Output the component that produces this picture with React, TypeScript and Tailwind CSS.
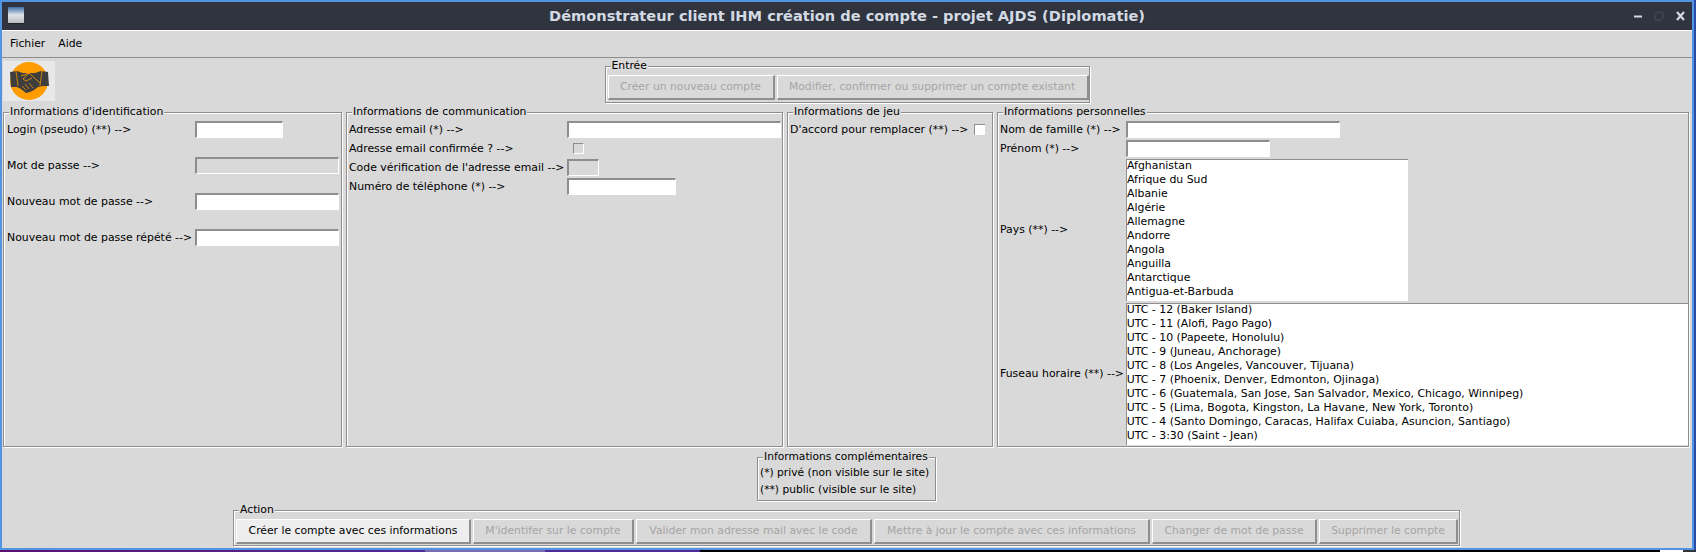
import type { ReactNode } from "react";

const countries = [
  "Afghanistan",
  "Afrique du Sud",
  "Albanie",
  "Algérie",
  "Allemagne",
  "Andorre",
  "Angola",
  "Anguilla",
  "Antarctique",
  "Antigua-et-Barbuda",
];

const timezones = [
  "UTC - 12 (Baker Island)",
  "UTC - 11 (Alofi, Pago Pago)",
  "UTC - 10 (Papeete, Honolulu)",
  "UTC - 9 (Juneau, Anchorage)",
  "UTC - 8 (Los Angeles, Vancouver, Tijuana)",
  "UTC - 7 (Phoenix, Denver, Edmonton, Ojinaga)",
  "UTC - 6 (Guatemala, San Jose, San Salvador, Mexico, Chicago, Winnipeg)",
  "UTC - 5 (Lima, Bogota, Kingston, La Havane, New York, Toronto)",
  "UTC - 4 (Santo Domingo, Caracas, Halifax Cuiaba, Asuncion, Santiago)",
  "UTC - 3:30 (Saint - Jean)",
];

// Swing etched box with its title sitting on the top line
function Group({ title, className, children }: { title: string; className: string; children?: ReactNode }) {
  return (
    <div className={"relative border border-[#8e8e8e] shadow-[inset_1px_1px_0_#fff,1px_1px_0_#fff] " + className}>
      <span className="absolute left-[5px] -top-[8px] bg-[#d9d9d9] px-[1px] leading-[14px] whitespace-nowrap">{title}</span>
      {children}
    </div>
  );
}

function Field({ className, disabled }: { className: string; disabled?: boolean }) {
  return (
    <div
      className={
        "h-[17px] border-t-2 border-l-2 border-t-[#8e8e8e] border-l-[#8e8e8e] border-r border-b border-r-white border-b-white " +
        (disabled ? "bg-[#d9d9d9] " : "bg-white ") +
        className
      }
    />
  );
}

function Check({ className }: { className: string }) {
  return <div className={"h-[11px] w-[11px] border-t border-l border-[#8e8e8e] " + className} />;
}

function ListBox({ items, className }: { items: string[]; className: string }) {
  return (
    <div className={"overflow-hidden border-t border-l border-[#8e8e8e] bg-white " + className}>
      <div className="-mt-[1px] flex flex-col">
        {items.map((item) => (
          <div key={item} className="h-[14px] shrink-0 leading-[14px] whitespace-nowrap">
            {item}
          </div>
        ))}
      </div>
    </div>
  );
}

function Btn({ label, className, enabled }: { label: string; className: string; enabled?: boolean }) {
  return (
    <div
      className={
        "flex items-center justify-center whitespace-nowrap border border-b-2 border-r-2 border-[#8e8e8e] border-t-white border-l-white " +
        (enabled ? "bg-[#eeeeee] text-black " : "text-[#a5a5a5] ") +
        className
      }
    >
      {label}
    </div>
  );
}

function Logo() {
  return (
    <svg width="52" height="40" viewBox="0 0 52 40" className="block">
      <rect width="52" height="40" fill="#e8e8e8" />
      <circle cx="26" cy="20" r="19" fill="#ff9c00" />
      <path
        d="M7 11l7-1 6 2h12l6-2 7 1 1 14-6 0-5 1-4 3-4 2-4 1-5-4-4-2-6 0z"
        fill="#3e3e3e"
      />
      <path d="M13 10l2 15M39 10l-2 15" fill="none" stroke="#ff9c00" strokeWidth="0.7" />
      <path d="M18 15l8-3 11 10M26 12l-6 6 3 2 6-3" fill="none" stroke="#ff9c00" strokeWidth="0.8" />
      <path d="M19 25l4 4M22 23l4 5M26 22l4 5" fill="none" stroke="#ff9c00" strokeWidth="0.7" />
    </svg>
  );
}

export default function App() {
  return (
    <div className="flex h-[552px] w-[1696px] flex-col overflow-hidden bg-black font-['DejaVu_Sans',sans-serif] text-[10.8px] leading-[14px] text-black">
      <div className="flex h-[550px] shrink-0">
        <div className="flex h-[550px] w-[1694px] flex-col border-2 border-[#5294e2]">
          {/* barre de titre */}
          <div className="relative flex h-[28px] shrink-0 items-center justify-center bg-[#2f343f] text-[14.6px] font-bold text-[#d3dae3]">
            <div className="absolute left-[6px] top-[5px] h-[16px] w-[16px] bg-gradient-to-b from-[#3f6fa8] via-[#dfe3e8] to-[#b9bcc0] shadow-[0_1px_0_#1f2229]" />
            Démonstrateur client IHM création de compte - projet AJDS (Diplomatie)
            <svg width="52" height="12" viewBox="0 0 52 12" className="absolute right-[6px] top-[8px]">
              <path d="M0 6.5h8" stroke="#d3dae3" strokeWidth="2" />
              <path d="M21 10V4l3-2h5M29 2v6l-3 2h-5" fill="none" stroke="#3c414c" strokeWidth="2" />
              <path d="M43 2l7 8M50 2l-7 8" stroke="#d3dae3" strokeWidth="2.2" />
            </svg>
          </div>
          <div className="h-[1px] shrink-0 bg-white" />

          <div className="flex min-h-0 flex-1 flex-col bg-[#d9d9d9]">
            {/* menu */}
            <div className="flex h-[27px] shrink-0 items-center gap-[13px] border-b border-[#8e8e8e] pl-[8px]">
              <span>Fichier</span>
              <span>Aide</span>
            </div>

            {/* logo + entrée */}
            <div className="relative flex h-[54px] shrink-0 justify-center pt-[8px]">
              <div className="absolute left-[1px] top-[3px]">
                <Logo />
              </div>
              <Group title="Entrée" className="flex h-[37px] w-[485px] gap-[2px] pl-[2px] pt-[8px]">
                <Btn label="Créer un nouveau compte" className="h-[25px] w-[167px]" />
                <Btn label="Modifier, confirmer ou supprimer un compte existant" className="h-[25px] w-[312px]" />
              </Group>
            </div>

            {/* panneaux */}
            <div className="flex h-[335px] shrink-0 gap-[4px] whitespace-nowrap pl-[1px] text-[10.9px]">
              <Group title="Informations d'identification" className="flex w-[339px] shrink-0 flex-col gap-[19px] pl-[3px] pt-[8px]">
                <div className="flex items-center">
                  <span className="w-[188px]">Login (pseudo) (**) --&gt;</span>
                  <Field className="w-[88px]" />
                </div>
                <div className="flex items-center">
                  <span className="w-[188px]">Mot de passe --&gt;</span>
                  <Field className="w-[144px]" disabled />
                </div>
                <div className="flex items-center">
                  <span className="w-[188px]">Nouveau mot de passe --&gt;</span>
                  <Field className="w-[144px]" />
                </div>
                <div className="flex items-center">
                  <span className="w-[188px]">Nouveau mot de passe répété --&gt;</span>
                  <Field className="w-[144px]" />
                </div>
              </Group>

              <Group title="Informations de communication" className="flex w-[437px] shrink-0 flex-col gap-[2px] pl-[2px] pt-[8px]">
                <div className="flex items-center">
                  <span className="w-[218px]">Adresse email (*) --&gt;</span>
                  <Field className="w-[214px]" />
                </div>
                <div className="flex h-[17px] items-center">
                  <span className="w-[224px]">Adresse email confirmée ? --&gt;</span>
                  <Check className="bg-[#d9d9d9] border-r border-b border-r-white border-b-white" />
                </div>
                <div className="flex items-center">
                  <span className="w-[218px]">Code vérification de l'adresse email --&gt;</span>
                  <Field className="w-[32px]" disabled />
                </div>
                <div className="flex items-center">
                  <span className="w-[218px]">Numéro de téléphone (*) --&gt;</span>
                  <Field className="w-[109px]" />
                </div>
              </Group>

              <Group title="Informations de jeu" className="flex w-[206px] shrink-0 flex-col pl-[2px] pt-[8px]">
                <div className="flex h-[17px] items-center">
                  <span className="w-[184px]">D'accord pour remplacer (**) --&gt;</span>
                  <Check className="bg-white" />
                </div>
              </Group>

              <Group title="Informations personnelles" className="flex w-[692px] shrink-0 flex-col gap-[2px] pl-[2px] pt-[8px]">
                <div className="flex items-center">
                  <span className="w-[126px]">Nom de famille (*) --&gt;</span>
                  <Field className="w-[214px]" />
                </div>
                <div className="flex items-center">
                  <span className="w-[126px]">Prénom (*) --&gt;</span>
                  <Field className="w-[144px]" />
                </div>
                <div className="flex items-center">
                  <span className="w-[126px]">Pays (**) --&gt;</span>
                  <ListBox items={countries} className="h-[142px] w-[282px]" />
                </div>
                <div className="flex items-center">
                  <span className="w-[126px]">Fuseau horaire (**) --&gt;</span>
                  <ListBox items={timezones} className="h-[142px] w-[563px]" />
                </div>
              </Group>
            </div>

            {/* légende */}
            <div className="flex shrink-0 justify-center whitespace-nowrap pt-[10px] text-[10.7px]">
              <Group title="Informations complémentaires" className="ml-[-1px] flex h-[44px] w-[179px] flex-col justify-end gap-[3px] pb-[3px] pl-[2px]">
                <div>(*) privé (non visible sur le site)</div>
                <div>(**) public (visible sur le site)</div>
              </Group>
            </div>

            {/* actions */}
            <div className="flex shrink-0 pl-[231px] pt-[9px]">
              <Group title="Action" className="flex h-[36px] w-[1227px] gap-[2px] pl-[2px] pt-[8px]">
                <Btn label="Créer le compte avec ces informations" className="h-[25px] w-[235px]" enabled />
                <Btn label="M'identifer sur le compte" className="h-[25px] w-[161px]" />
                <Btn label="Valider mon adresse mail avec le code" className="h-[25px] w-[236px]" />
                <Btn label="Mettre à jour le compte avec ces informations" className="h-[25px] w-[276px]" />
                <Btn label="Changer de mot de passe" className="h-[25px] w-[165px]" />
                <Btn label="Supprimer le compte" className="h-[25px] w-[139px]" />
              </Group>
            </div>
          </div>
        </div>
        <div className="h-full w-[2px] bg-[#2a4ca8]" />
      </div>

      {/* fond d'écran visible sous la fenêtre */}
      <div className="flex h-[2px] shrink-0">
        <div className="w-[425px] bg-gradient-to-r from-[#5a0f72] to-[#4d2a9a]" />
        <div className="w-[120px] bg-[#7a6ab0]" />
        <div className="w-[155px] bg-[#4d2a9a]" />
        <div className="w-[960px] bg-black" />
        <div className="w-[23px] bg-white" />
        <div className="w-[13px] bg-[#30343c]" />
      </div>
    </div>
  );
}
